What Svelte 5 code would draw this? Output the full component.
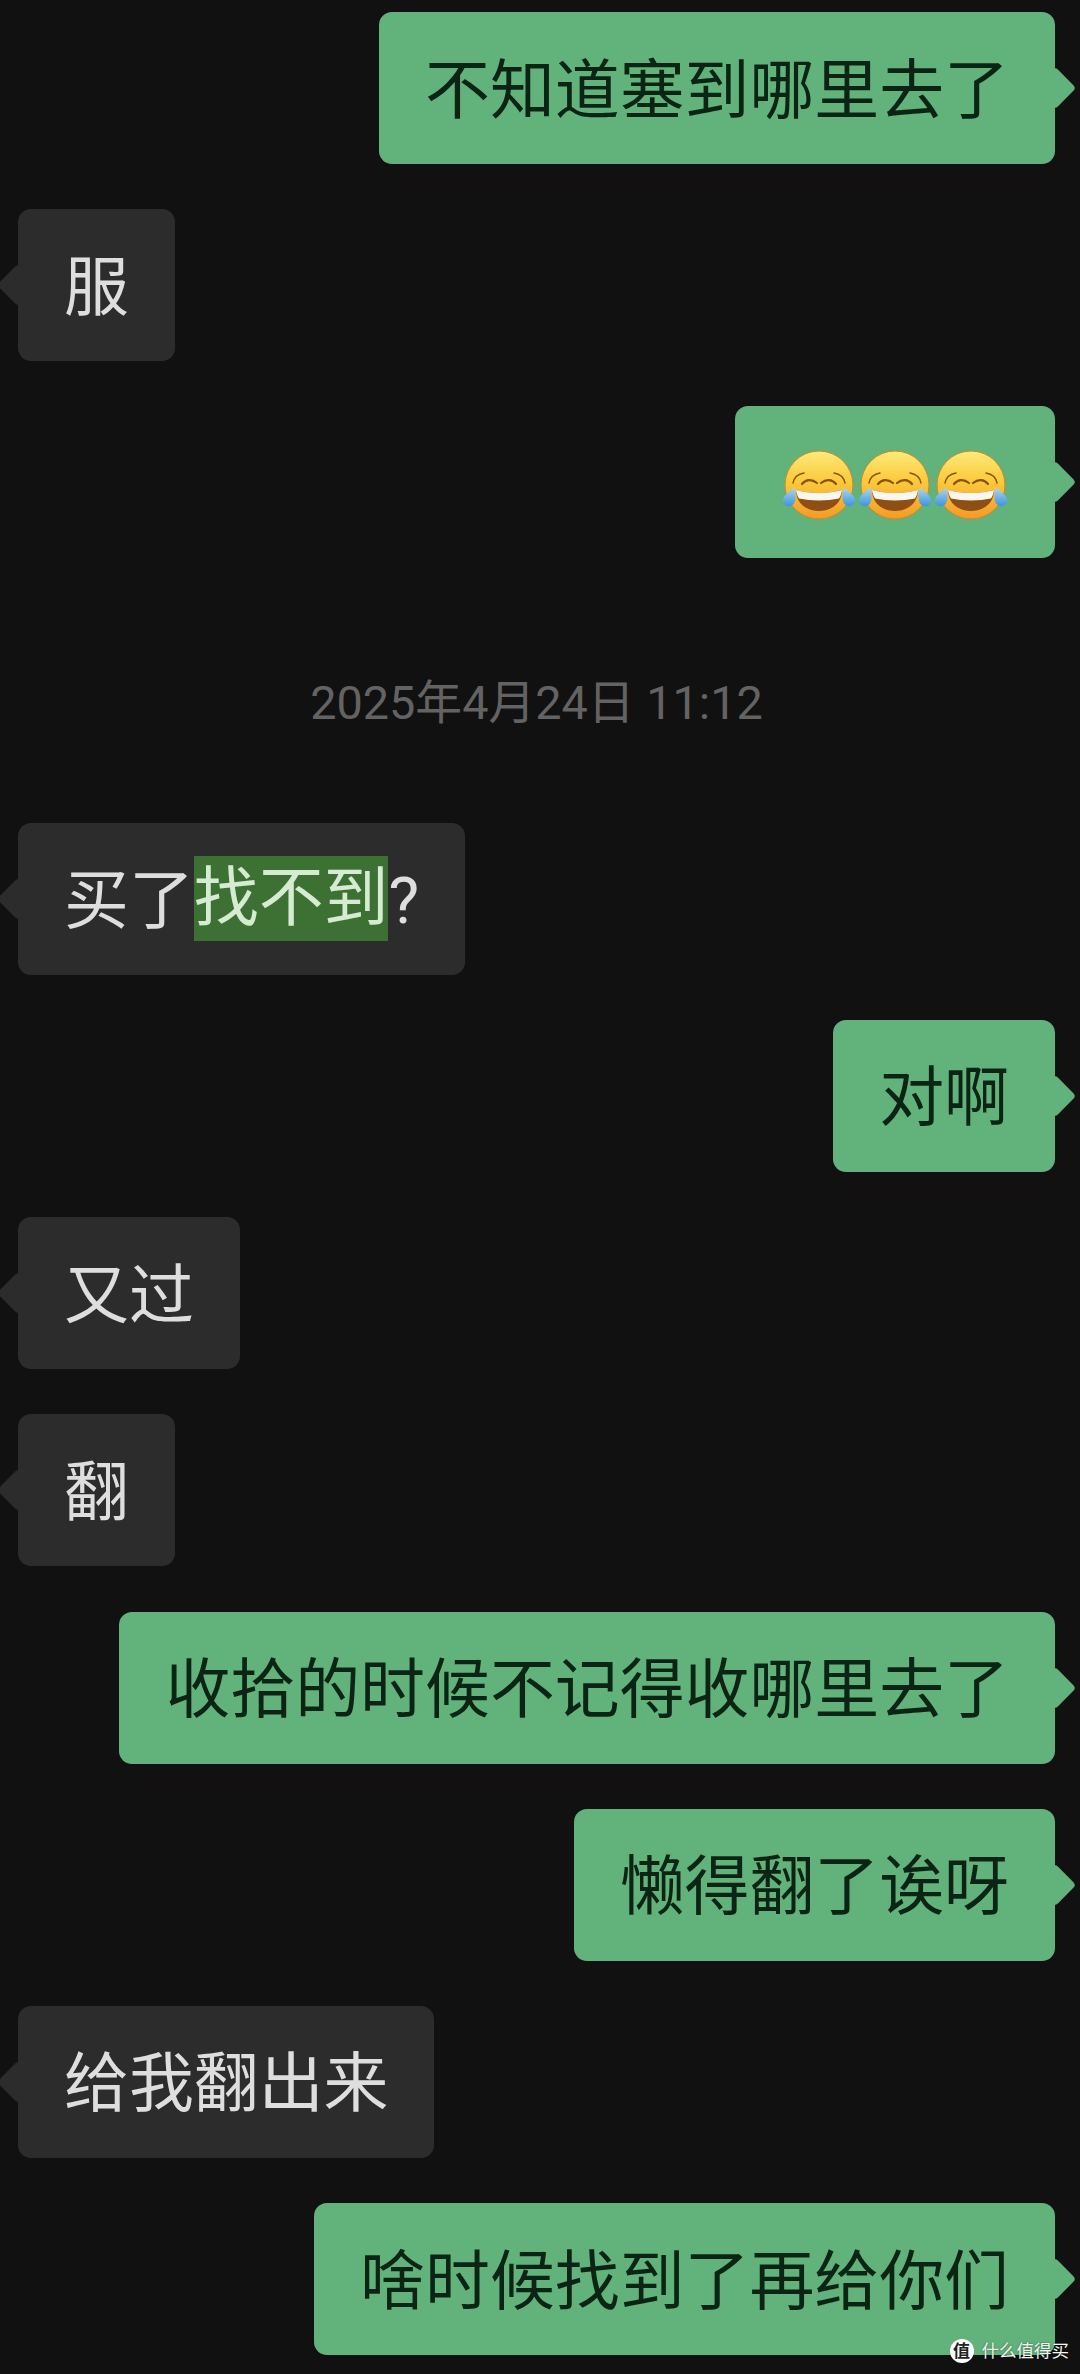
<script lang="ts">
  type Row =
    | { kind: 'time'; text: string }
    | { kind: 'in' | 'out'; text?: string; parts?: string[]; emoji?: number };

  const rows: Row[] = [
    { kind: 'out', text: '不知道塞到哪里去了' },
    { kind: 'in', text: '服' },
    { kind: 'out', emoji: 3 },
    { kind: 'time', text: '2025年4月24日 11:12' },
    { kind: 'in', parts: ['买了', '找不到', '?'] },
    { kind: 'out', text: '对啊' },
    { kind: 'in', text: '又过' },
    { kind: 'in', text: '翻' },
    { kind: 'out', text: '收拾的时候不记得收哪里去了' },
    { kind: 'out', text: '懒得翻了诶呀' },
    { kind: 'in', text: '给我翻出来' },
    { kind: 'out', text: '啥时候找到了再给你们' },
  ];
</script>

<div class="chat">
  {#each rows as row}
    {#if row.kind === 'time'}
      <div class="time">{row.text}</div>
    {:else}
      <div class="row {row.kind}">
        <div class="bubble">
          {#if row.emoji}
            {#each Array(row.emoji) as _}
              <svg class="emoji" viewBox="0 0 76 76" role="img" aria-label="😂">
                <defs>
                  <linearGradient id="face" x1="0" y1="0" x2="0" y2="1">
                    <stop offset="0" stop-color="#fdea7a" />
                    <stop offset="0.45" stop-color="#fbc93a" />
                    <stop offset="1" stop-color="#f49a28" />
                  </linearGradient>
                  <linearGradient id="tear" x1="0" y1="0" x2="0" y2="1">
                    <stop offset="0" stop-color="#a9d8f4" />
                    <stop offset="1" stop-color="#3f93dc" />
                  </linearGradient>
                </defs>
                <circle cx="38" cy="38" r="34" fill="url(#face)" stroke="#c98a2c" stroke-width="1" />
                <g fill="none" stroke="#8a5310" stroke-linecap="round">
                  <path d="M12 36C13 31 17 27 23 26" stroke-width="1.4" />
                  <path d="M64 36C63 31 59 27 53 26" stroke-width="1.4" />
                  <path d="M21 37C25 32 31 32 36 36" stroke-width="2.2" />
                  <path d="M55 37C51 32 45 32 40 36" stroke-width="2.2" />
                </g>
                <path d="M15 43C29 47 47 47 61 43C61 56 51 64 38 64C25 64 15 56 15 43Z" fill="#8e4f14" />
                <path d="M15 43C29 47 47 47 61 43C60.500 47 59.500 49 58 51.500C46 54 30 54 18 51.500C16.500 49 15.500 47 15 43Z" fill="#fbf6ee" />
                <path d="M13.500 40.500C14.500 46 15 50 14 54C13 58 9.500 60 6 59C2.500 58 1 54.500 2.500 51C4.500 47 9 43.500 13.500 40.500Z" fill="url(#tear)" />
                <path d="M62.500 40.500C61.500 46 61 50 62 54C63 58 66.500 60 70 59C73.500 58 75 54.500 73.500 51C71.500 47 67 43.500 62.500 40.500Z" fill="url(#tear)" />
              </svg>
            {/each}
          {:else if row.parts}
            {row.parts[0]}<span class="hit">{row.parts[1]}</span>{row.parts[2]}
          {:else}
            {row.text}
          {/if}
        </div>
      </div>
    {/if}
  {/each}

  <div class="mark">
    <span class="mark-logo">值</span>
    <span class="mark-text">什么值得买</span>
  </div>
</div>

<style>
  :global(body) {
    margin: 0;
    background: #111111;
  }

  .chat {
    position: relative;
    height: 2374px;
    box-sizing: border-box;
    overflow: hidden;
    padding-top: 12px;
    display: flex;
    flex-direction: column;
    gap: 45.200px;
    background: #111111;
    font-family: Roboto, 'Noto Sans CJK SC', sans-serif;
  }

  .row {
    display: flex;
  }

  .row.in {
    justify-content: flex-start;
    padding-left: 18px;
  }

  .row.out {
    justify-content: flex-end;
    padding-right: 25px;
  }

  .bubble {
    position: relative;
    display: flex;
    align-items: center;
    height: 152px;
    box-sizing: border-box;
    padding: 6px 46px 0;
    border-radius: 13px;
    font-size: 64.900px;
    line-height: 85px;
    white-space: pre;
  }

  .bubble::after {
    content: '';
    position: absolute;
    top: 50%;
    width: 30px;
    height: 30px;
    margin-top: -15px;
    background: inherit;
    border-radius: 4px;
    transform: rotate(45deg);
  }

  .in .bubble {
    background: #2c2c2c;
    color: #dedede;
  }

  .in .bubble::after {
    left: -15px;
  }

  .out .bubble {
    background: #62b27b;
    color: #0b2413;
  }

  .out .bubble::after {
    right: -15px;
  }

  .hit {
    display: inline-block;
    height: 85px;
    margin-top: -6px;
    background: #3d7133;
    color: #d6ecd2;
  }

  .emoji {
    display: block;
    width: 76px;
    height: 76px;
  }

  .time {
    height: 174px;
    padding: 16px 7px 0 0;
    box-sizing: border-box;
    display: flex;
    align-items: center;
    justify-content: center;
    color: #636363;
    font-size: 46.800px;
  }

  .mark {
    position: absolute;
    right: 11px;
    bottom: 11px;
    display: flex;
    align-items: center;
    gap: 8px;
    color: #f4f4f4;
  }

  .mark-logo {
    width: 24px;
    height: 24px;
    border-radius: 50%;
    background: #ffffff;
    color: #222222;
    font-size: 17px;
    font-weight: 700;
    line-height: 24px;
    text-align: center;
  }

  .mark-text {
    font-size: 17.500px;
    line-height: 24px;
    text-shadow: 0 0 2px rgba(0, 0, 0, 0.5);
  }
</style>
